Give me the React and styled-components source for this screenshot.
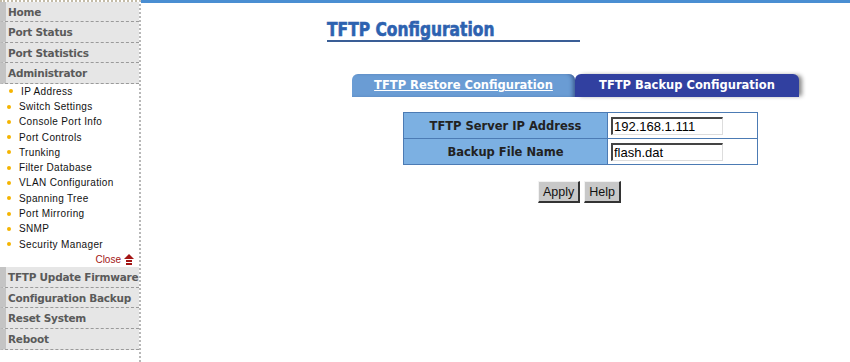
import React from "react";
import styled, { createGlobalStyle } from "styled-components";

const GlobalStyle = createGlobalStyle`
  html, body {
    margin: 0;
    padding: 0;
    background: #fff;
  }
  body {
    font-family: "DejaVu Sans", Verdana, sans-serif;
  }
`;

const mainMenu = ["Home", "Port Status", "Port Statistics", "Administrator"];
const subMenu = [
  "IP Address",
  "Switch Settings",
  "Console Port Info",
  "Port Controls",
  "Trunking",
  "Filter Database",
  "VLAN Configuration",
  "Spanning Tree",
  "Port Mirroring",
  "SNMP",
  "Security Manager",
];
const bottomMenu = ["TFTP Update Firmware", "Configuration Backup", "Reset System", "Reboot"];

const App = () => {
  return (
    <Page>
      <GlobalStyle />
      <Sidebar>
        {mainMenu.map((item) => (
          <MenuItem key={item}>{item}</MenuItem>
        ))}
        <SubList>
          {subMenu.map((item, i) => (
            <SubItem key={item} $indent={i === 0}>
              <Dot />
              {item}
            </SubItem>
          ))}
          <CloseRow>
            Close
            <svg width="10" height="11" viewBox="0 0 10 11">
              <polygon points="5,0 10,5 0,5" fill="#a31515" />
              <rect x="2" y="6" width="6" height="2" fill="#a31515" />
              <rect x="2" y="9" width="6" height="2" fill="#a31515" />
            </svg>
          </CloseRow>
        </SubList>
        {bottomMenu.map((item) => (
          <MenuItem key={item} $tall>
            {item}
          </MenuItem>
        ))}
      </Sidebar>
      <Main>
        <TopBar />
        <Content>
          <Title>
            <span>TFTP Configuration</span>
          </Title>
          <Tabs>
            <Tab>
              <a>TFTP Restore Configuration</a>
            </Tab>
            <Tab $active>TFTP Backup Configuration</Tab>
          </Tabs>
          <Form>
            <tbody>
              <tr>
                <LabelCell>TFTP Server IP Address</LabelCell>
                <ValueCell>
                  <Field defaultValue="192.168.1.111" />
                </ValueCell>
              </tr>
              <tr>
                <LabelCell>Backup File Name</LabelCell>
                <ValueCell>
                  <Field defaultValue="flash.dat" />
                </ValueCell>
              </tr>
            </tbody>
          </Form>
          <Buttons>
            <Button>Apply</Button>
            <Button>Help</Button>
          </Buttons>
        </Content>
      </Main>
    </Page>
  );
};

const Page = styled.div`
  display: flex;
  width: 850px;
  height: 362px;
  overflow: hidden;
`;

const Sidebar = styled.div`
  width: 139px;
  flex-shrink: 0;
  border-top: 2px dotted #c4bca8;
  border-right: 2px dotted #b8b8b8;
  display: flex;
  flex-direction: column;
`;

const MenuItem = styled.div`
  height: ${(p) => (p.$tall ? "18.7px" : "18.4px")};
  line-height: ${(p) => (p.$tall ? "18.7px" : "18.4px")};
  padding-top: 1px;
  flex-shrink: 0;
  background: #e6e6e6;
  border-left: 6px solid #c4c4c4;
  border-bottom: 1px dashed #9a9a9a;
  padding-left: 2px;
  font-size: 10.5px;
  font-weight: bold;
  color: #5a5a5a;
  letter-spacing: -0.25px;
  white-space: nowrap;
  overflow: hidden;
`;

const SubList = styled.div`
  display: flex;
  flex-direction: column;
`;

const SubItem = styled.div`
  display: flex;
  align-items: center;
  height: 15.3px;
  font-family: "Liberation Sans", Arial, sans-serif;
  font-size: 10px;
  letter-spacing: 0.35px;
  color: #111;
  padding-left: ${(p) => (p.$indent ? "9px" : "7px")};
`;

const Dot = styled.span`
  display: inline-block;
  width: 4px;
  height: 4px;
  border-radius: 50%;
  background: #f5b400;
  margin-right: 8px;
`;

const CloseRow = styled.div`
  display: flex;
  align-items: center;
  justify-content: flex-end;
  gap: 3px;
  height: 15px;
  padding-right: 5px;
  font-family: "Liberation Sans", Arial, sans-serif;
  font-size: 10px;
  color: #a31515;
`;

const Main = styled.div`
  flex: 1;
  display: flex;
  flex-direction: column;
`;

const TopBar = styled.div`
  height: 3px;
  background: #4a8ed2;
`;

const Content = styled.div`
  padding-left: 186px;
  display: flex;
  flex-direction: column;
`;

const Title = styled.div`
  margin-top: 16px;
  width: 253px;
  height: 21px;
  border-bottom: 2px solid #3a5e96;
  span {
    font-family: "DejaVu Sans Condensed", "DejaVu Sans", sans-serif;
    font-stretch: condensed;
    font-weight: bold;
    font-size: 20px;
    color: #2d62b0;
    -webkit-text-stroke: 0.6px #2d62b0;
    display: inline-block;
    transform: scaleX(0.86);
    transform-origin: left;
    line-height: 21px;
    white-space: nowrap;
  }
`;

const Tabs = styled.div`
  display: flex;
  margin-top: 32px;
  margin-left: 25px;
  height: 23px;
`;

const Tab = styled.div`
  height: 23px;
  line-height: 23px;
  width: ${(p) => (p.$active ? "224px" : "223px")};
  text-align: center;
  font-size: 11.5px;
  font-weight: bold;
  color: #fff;
  background: ${(p) => (p.$active ? "#3140a0" : "#6a9cd4")};
  border-radius: 6px 6px 0 0;
  box-shadow: ${(p) => (p.$active ? "4px 0 4px -1px #8a8a8a" : "inset -4px 0 4px -2px #3c5a90")};
  a {
    text-decoration: underline;
    cursor: pointer;
  }
`;

const Form = styled.table`
  margin-top: 15px;
  margin-left: 76px;
  width: 355px;
  border-collapse: collapse;
  border: 1px solid #4c7bb4;
`;

const LabelCell = styled.td`
  width: 203px;
  height: 25px;
  background: #7cb0e2;
  border: 1px solid #4c7bb4;
  text-align: center;
  font-size: 11.5px;
  font-weight: bold;
  color: #222;
  padding: 0;
`;

const ValueCell = styled.td`
  border: 1px solid #4c7bb4;
  background: #fff;
  padding: 0 0 0 3px;
`;

const Field = styled.input`
  width: 107px;
  height: 15px;
  padding: 0 1px;
  border-style: solid;
  border-width: 2px 1px 1px 2px;
  border-color: #444 #ddd #ddd #444;
  font-family: "Liberation Sans", Arial, sans-serif;
  font-size: 13px;
  color: #000;
  outline: none;
`;

const Buttons = styled.div`
  display: flex;
  gap: 4px;
  margin-top: 16px;
  margin-left: 211px;
`;

const Button = styled.button`
  height: 22px;
  padding: 0 4px;
  background: #c8c8c8;
  border-style: solid;
  border-width: 1px 2px 2px 1px;
  border-color: #f2f2f2 #333 #333 #f2f2f2;
  font-family: "Liberation Sans", Arial, sans-serif;
  font-size: 12.5px;
  color: #111;
`;

export default App;
